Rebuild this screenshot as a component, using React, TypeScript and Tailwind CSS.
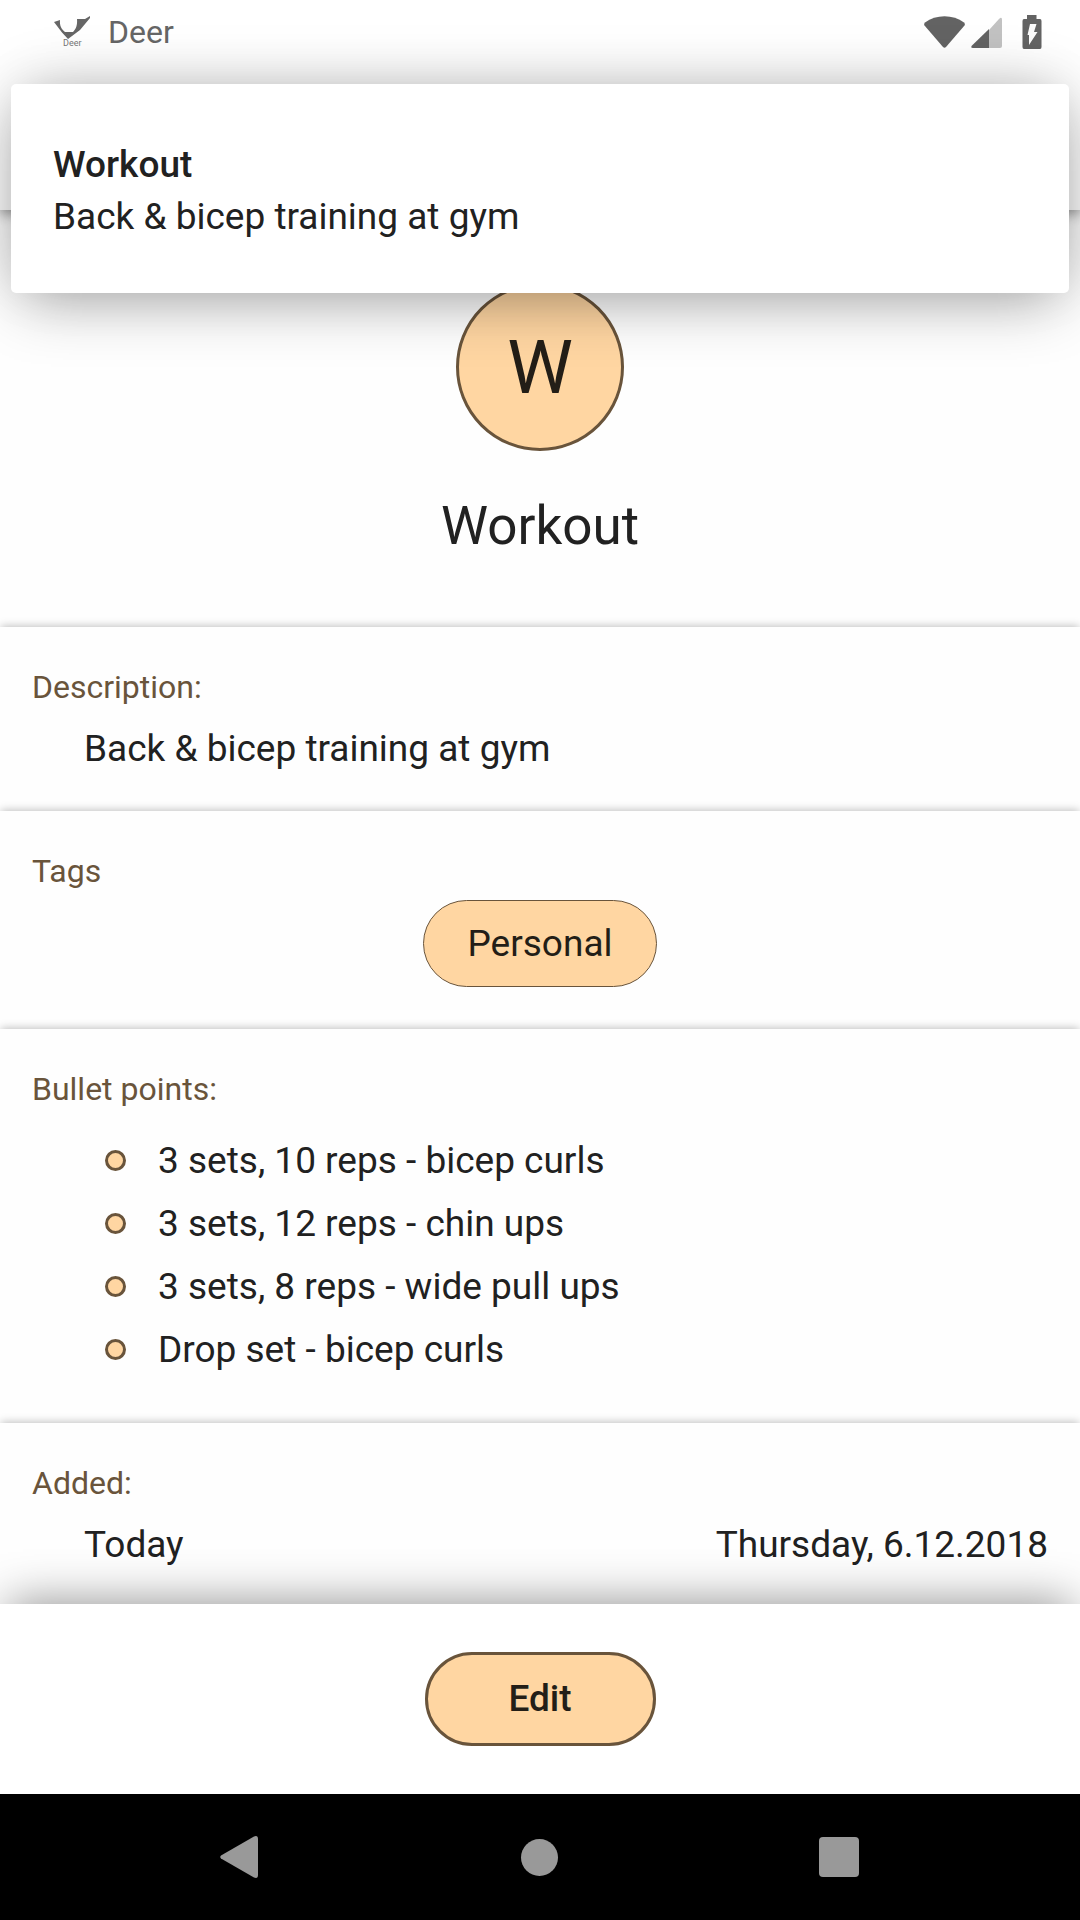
import { ReactNode } from "react";

interface SectionProps {
  title: string;
  className?: string;
  children: ReactNode;
}

const bulletPoints = [
  "3 sets, 10 reps - bicep curls",
  "3 sets, 12 reps - chin ups",
  "3 sets, 8 reps - wide pull ups",
  "Drop set - bicep curls",
];

const DeerLogo = () => (
  <svg width="36" height="32" viewBox="0 0 36 32" aria-hidden="true">
    <path
      d="M0 6L6 4C5.500 9 7 13 11 16H19C22 13 23.500 9 23 3H31L36 0V2L26 14L14 23L8 16.500Z"
      fill="#666"
    />
    <text x="9" y="30" fontSize="9" fill="#777">
      Deer
    </text>
  </svg>
);

const StatusIcons = () => (
  <div className="flex items-center">
    <svg width="41" height="32" viewBox="0 0 41 32" aria-hidden="true">
      <path
        d="M1 6.500C12 -2 29 -2 40 6.500Q41.500 8 40.500 9.500L22 31Q20.500 32.500 19 31L0.500 9.500Q-0.500 8 1 6.500Z"
        fill="#636363"
      />
    </svg>
    <svg className="ml-1.5" width="32" height="32" viewBox="0 0 32 32" aria-hidden="true">
      <path d="M18 14L28 3Q31 0 31 4V30Q31 32 29 32H18Z" fill="#c2c2c2" />
      <path d="M18 13V32H2Q-1 32 1 29.500Z" fill="#636363" />
    </svg>
    <svg className="ml-[19px]" width="20" height="34" viewBox="0 0 20 34" aria-hidden="true">
      <path
        d="M5 0H14.500V4H18Q19.500 4 19.500 6V32Q19.500 34 18 34H2Q0.500 34 0.500 32V6Q0.500 4 2 4H5Z"
        fill="#636363"
      />
      <path d="M8 9H14.500L12 17H15.500L7 30V20H5.500Z" fill="#fafafa" />
    </svg>
  </div>
);

const Section = ({ title, className = "", children }: SectionProps) => (
  <section
    className={`bg-[#fefefe] px-8 pt-[42px] pb-10 shadow-[0_-2px_8px_-1px_rgba(0,0,0,0.25)] ${className}`}
  >
    <h2 className="text-[32px] leading-9 text-[#69543b]">{title}</h2>
    {children}
  </section>
);

const Notification = () => (
  <div
    role="alert"
    className="absolute inset-x-[11px] top-[84px] z-10 rounded-[5px] bg-white px-[42px] pt-[55px] pb-[50px] text-[37px] leading-[52px] shadow-[0_-8px_60px_-12px_rgba(0,0,0,0.2),0_16px_60px_-10px_rgba(0,0,0,0.33)]"
  >
    <p className="font-medium">Workout</p>
    <p>Back &amp; bicep training at gym</p>
  </div>
);

const App = () => {
  return (
    <div className="relative flex min-h-screen flex-col overflow-hidden bg-[#fefefe] font-[Roboto,sans-serif] text-[#212121]">
      <header className="relative h-[210px] bg-white shadow-[0_4px_12px_rgba(0,0,0,0.4)]">
        <div className="flex h-16 items-center justify-between pr-[38px] pl-[54px]">
          <div className="flex items-center gap-[18px] text-[32px] text-[#666]">
            <DeerLogo />
            <span>Deer</span>
          </div>
          <StatusIcons />
        </div>
      </header>

      <Notification />

      <main className="flex flex-1 flex-col">
        <div className="flex flex-col items-center pt-[73px] pb-[71px]">
          <div className="flex size-[168px] items-center justify-center rounded-full border-3 border-[#69543b] bg-[#ffd6a2] text-[74px] text-[#231e17]">
            W
          </div>
          <h1 className="mt-[45px] text-[53px] leading-[60px]">Workout</h1>
        </div>

        <Section title="Description:">
          <p className="mt-[22px] pl-[52px] text-[37px] leading-[44px]">
            Back &amp; bicep training at gym
          </p>
        </Section>

        <Section title="Tags">
          <div className="mt-[11px] mb-0.5 flex justify-center">
            <span className="rounded-full border border-[#69543b] bg-[#ffd6a2] px-[43px] py-[21px] text-[37px] leading-[43px] text-[#231e17]">
              Personal
            </span>
          </div>
        </Section>

        <Section title="Bullet points:">
          <ul className="mt-[22px] mb-0.5 pl-[73px] text-[37px] leading-[63px]">
            {bulletPoints.map((point) => (
              <li key={point} className="flex items-center gap-8">
                <span className="size-[21px] rounded-full border-3 border-[#69543b] bg-[#ffd6a2]" />
                {point}
              </li>
            ))}
          </ul>
        </Section>

        <Section title="Added:" className="flex-1">
          <div className="mt-[22px] flex justify-between pl-[52px] text-[37px] leading-[44px]">
            <span>Today</span>
            <span>Thursday, 6.12.2018</span>
          </div>
        </Section>
      </main>

      <div className="-mt-1 flex justify-center bg-white py-12 shadow-[0_-10px_44px_-8px_rgba(0,0,0,0.42)]">
        <button
          type="button"
          className="h-[94px] w-[231px] rounded-full border-3 border-[#69543b] bg-[#ffd6a2] text-[37px] font-medium text-[#231e17]"
        >
          Edit
        </button>
      </div>

      <nav className="relative flex h-[126px] justify-center bg-black pr-0.5">
        <button type="button" aria-label="Back" className="flex w-[300px] items-center justify-center">
          <svg width="38" height="42" viewBox="0 0 38 42" aria-hidden="true">
            <path d="M1 19.500L34 0.500Q38 -1 38 3V39Q38 43 34 41.500L1 22.500Q-0.500 21 1 19.500Z" fill="#999" />
          </svg>
        </button>
        <button type="button" aria-label="Home" className="flex w-[300px] items-center justify-center">
          <span className="size-[37px] rounded-full bg-[#999]" />
        </button>
        <button type="button" aria-label="Recent apps" className="flex w-[300px] items-center justify-center">
          <span className="size-10 rounded-[4px] bg-[#999]" />
        </button>
      </nav>
    </div>
  );
};

export default App;
